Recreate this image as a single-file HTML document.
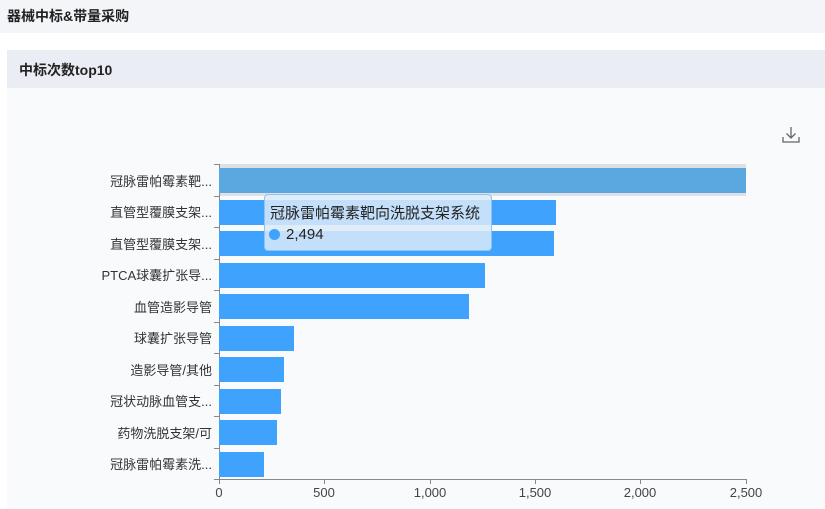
<!DOCTYPE html>
<html><head><meta charset="utf-8"><style>
*{margin:0;padding:0;box-sizing:border-box}
body{width:825px;height:509px;background:#fff;font-family:"Liberation Sans","Noto Sans CJK SC",sans-serif;position:relative;overflow:hidden;color:#333}
.top{position:absolute;left:0;top:0;width:825px;height:33px;background:#f3f5f9;font-weight:bold;font-size:14px;padding:6px 0 0 7px;color:#222}
.card{position:absolute;left:7px;top:50px;width:818px;height:459px;background:#f9fafc}
.ch{height:38px;background:#eaedf4;font-weight:bold;font-size:14px;padding:10px 0 0 12px;color:#222}
.a{position:absolute}
.lbl{position:absolute;right:613px;font-size:13px;color:#333;white-space:nowrap;text-align:right}
.bar{position:absolute;left:219px;height:25px;background:#3fa2fc}
.tick{position:absolute;left:214px;width:5px;height:1px;background:#888}
.xl{position:absolute;top:485px;font-size:13px;color:#444;transform:translateX(-50%)}
.xt{position:absolute;top:479px;width:1px;height:5px;background:#888}
</style></head><body>
<div class="top">器械中标&amp;带量采购</div>
<div class="card"><div class="ch">中标次数top10</div></div>
<svg class="a" style="left:780px;top:125px" width="22" height="20" viewBox="0 0 22 20"><path d="M11 2v11M6.5 8.5l4.5 4.5 4.5-4.5M3 12v5h16v-5" fill="none" stroke="#666" stroke-width="1.3"/></svg>
<div class="a" style="left:219px;top:164px;width:527px;height:32px;background:#dde0e6"></div>
<div class="a" style="left:219px;top:164px;width:1px;height:316px;background:#888"></div>
<div class="a" style="left:214px;top:479px;width:533px;height:1px;background:#888"></div>

<div class="bar" style="top:168px;width:527px;background:#5aa8df"></div>
<div class="bar" style="top:199.5px;width:337px"></div>
<div class="bar" style="top:231px;width:335px"></div>
<div class="bar" style="top:262.5px;width:266px"></div>
<div class="bar" style="top:294px;width:250px"></div>
<div class="bar" style="top:325.5px;width:75px"></div>
<div class="bar" style="top:357px;width:65px"></div>
<div class="bar" style="top:388.5px;width:62px"></div>
<div class="bar" style="top:420px;width:58px"></div>
<div class="bar" style="top:451.5px;width:45px"></div>

<div class="tick" style="top:164px"></div><div class="tick" style="top:195.5px"></div><div class="tick" style="top:227px"></div><div class="tick" style="top:258.5px"></div><div class="tick" style="top:290px"></div><div class="tick" style="top:321.5px"></div><div class="tick" style="top:353px"></div><div class="tick" style="top:384.5px"></div><div class="tick" style="top:416px"></div><div class="tick" style="top:447.5px"></div>

<div class="lbl" style="top:171px">冠脉雷帕霉素靶...</div>
<div class="lbl" style="top:202px">直管型覆膜支架...</div>
<div class="lbl" style="top:234px">直管型覆膜支架...</div>
<div class="lbl" style="top:265px">PTCA球囊扩张导...</div>
<div class="lbl" style="top:297px">血管造影导管</div>
<div class="lbl" style="top:328px">球囊扩张导管</div>
<div class="lbl" style="top:360px">造影导管/其他</div>
<div class="lbl" style="top:391px">冠状动脉血管支...</div>
<div class="lbl" style="top:423px">药物洗脱支架/可</div>
<div class="lbl" style="top:454px">冠脉雷帕霉素洗...</div>

<div class="xt" style="left:219px"></div><div class="xt" style="left:324px"></div><div class="xt" style="left:430px"></div><div class="xt" style="left:535px"></div><div class="xt" style="left:640px"></div><div class="xt" style="left:746px"></div>
<div class="xl" style="left:219px">0</div><div class="xl" style="left:324px">500</div><div class="xl" style="left:430px">1,000</div><div class="xl" style="left:535px">1,500</div><div class="xl" style="left:640px">2,000</div><div class="xl" style="left:746px">2,500</div>

<div class="a" style="left:264px;top:194px;width:228px;height:57px;background:rgba(220,234,248,0.85);border:1px solid #8cc4f5;border-radius:4px;font-size:15px;color:#222">
<div style="padding:7px 0 0 5px">冠脉雷帕霉素靶向洗脱支架系统</div>
<div style="padding:3px 0 0 4px;display:flex;align-items:center"><span style="width:11px;height:11px;border-radius:50%;background:#3fa2fc;display:inline-block;margin-right:6px"></span>2,494</div>
</div>
</body></html>
